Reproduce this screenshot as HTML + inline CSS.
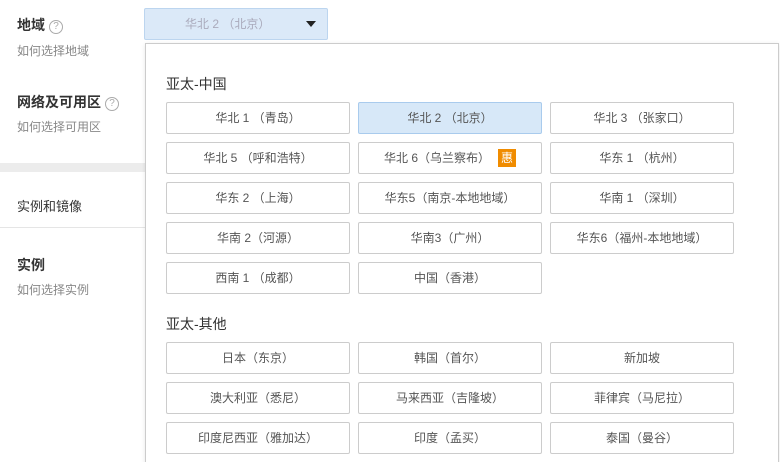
<!DOCTYPE html>
<html><head><meta charset="utf-8"><style>
*{margin:0;padding:0;box-sizing:border-box}
html,body{width:780px;height:462px;overflow:hidden}
body{background:#fff;font-family:"Liberation Sans","Noto Sans CJK SC",sans-serif;position:relative;color:#333}
.a{position:absolute;white-space:nowrap}
.t{font-size:14px;font-weight:bold;color:#333}
.s{font-size:12px;color:#888}
.q{display:inline-block;width:14px;height:14px;border:1px solid #aaa;border-radius:50%;font-size:10px;color:#aaa;text-align:center;line-height:12px;font-weight:normal;vertical-align:1px;margin-left:4px}
.b{position:absolute;width:184px;height:32px;border:1px solid #ccc;border-radius:2px;font-size:12px;color:#555;text-align:center;line-height:30px;background:#fff}
.sel{background:#d7e8f8;border-color:#a9cbed}
.h{position:absolute;font-size:14px;color:#333}
</style></head><body>
<div class="a" style="left:0;top:163px;width:145px;height:9px;background:#ececec"></div>
<div class="a" style="left:0;top:227px;width:145px;height:1px;background:#e5e5e5"></div>
<div class="a t" style="left:17px;top:15px">地域<span class="q">?</span></div>
<div class="a s" style="left:17px;top:42px">如何选择地域</div>
<div class="a t" style="left:17px;top:92px">网络及可用区<span class="q">?</span></div>
<div class="a s" style="left:17px;top:118px">如何选择可用区</div>
<div class="a" style="left:17px;top:196px;font-size:13px;color:#333">实例和镜像</div>
<div class="a t" style="left:17px;top:255px">实例</div>
<div class="a s" style="left:17px;top:281px">如何选择实例</div>
<div class="a" style="left:144px;top:8px;width:184px;height:32px;background:#dbe9f8;border:1px solid #bcd5ef;border-radius:2px;font-size:12px;color:#aab;line-height:30px;padding-left:40px">华北 2 （北京）</div>
<div class="a" style="left:306px;top:21px;width:0;height:0;border-left:5px solid transparent;border-right:5px solid transparent;border-top:6px solid #222"></div>
<div class="a" style="left:145px;top:43px;width:634px;height:430px;border:1px solid #ccc;background:#fff;box-shadow:0 1px 4px rgba(0,0,0,.1)"></div>
<div class="h" style="left:166px;top:74px">亚太-中国</div>
<div class="b" style="left:166px;top:102px">华北 1 （青岛）</div>
<div class="b sel" style="left:358px;top:102px">华北 2 （北京）</div>
<div class="b" style="left:550px;top:102px">华北 3 （张家口）</div>
<div class="b" style="left:166px;top:142px">华北 5 （呼和浩特）</div>
<div class="b" style="left:358px;top:142px">华北 6（乌兰察布）<span style="display:inline-block;width:18px;height:18px;background:#f08c00;color:#fff;line-height:18px;font-size:12px;margin-left:8px;vertical-align:0">惠</span></div>
<div class="b" style="left:550px;top:142px">华东 1 （杭州）</div>
<div class="b" style="left:166px;top:182px">华东 2 （上海）</div>
<div class="b" style="left:358px;top:182px">华东5（南京-本地地域）</div>
<div class="b" style="left:550px;top:182px">华南 1 （深圳）</div>
<div class="b" style="left:166px;top:222px">华南 2（河源）</div>
<div class="b" style="left:358px;top:222px">华南3（广州）</div>
<div class="b" style="left:550px;top:222px">华东6（福州-本地地域）</div>
<div class="b" style="left:166px;top:262px">西南 1 （成都）</div>
<div class="b" style="left:358px;top:262px">中国（香港）</div>
<div class="h" style="left:166px;top:314px">亚太-其他</div>
<div class="b" style="left:166px;top:342px">日本（东京）</div>
<div class="b" style="left:358px;top:342px">韩国（首尔）</div>
<div class="b" style="left:550px;top:342px">新加坡</div>
<div class="b" style="left:166px;top:382px">澳大利亚（悉尼）</div>
<div class="b" style="left:358px;top:382px">马来西亚（吉隆坡）</div>
<div class="b" style="left:550px;top:382px">菲律宾（马尼拉）</div>
<div class="b" style="left:166px;top:422px">印度尼西亚（雅加达）</div>
<div class="b" style="left:358px;top:422px">印度（孟买）</div>
<div class="b" style="left:550px;top:422px">泰国（曼谷）</div>
</body></html>
